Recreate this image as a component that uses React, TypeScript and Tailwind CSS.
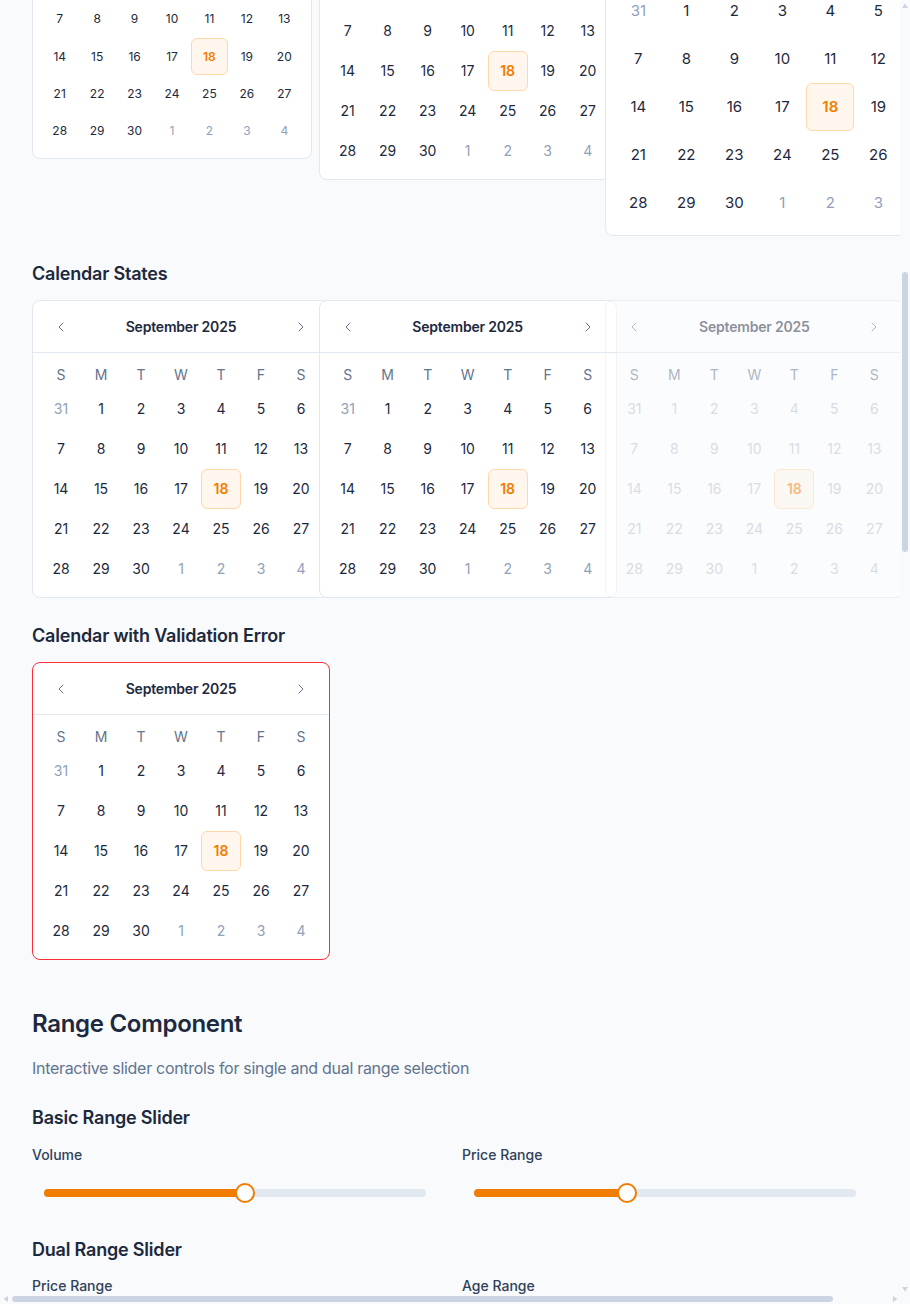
import React, { useLayoutEffect, useRef } from "react";
import clsx from "clsx";
import { ChevronLeft, ChevronRight } from "lucide-react";

type Size = "sm" | "md" | "lg";

const WEEKDAYS = ["S", "M", "T", "W", "T", "F", "S"];

// September 2025 starts on a Monday, so the grid opens with Aug 31 and closes on Oct 4
const DAYS: { n: number; outside: boolean }[] = [
  { n: 31, outside: true },
  ...Array.from({ length: 30 }, (_, i) => ({ n: i + 1, outside: false })),
  ...[1, 2, 3, 4].map((n) => ({ n, outside: true })),
];

const SIZES: Record<Size, { card: string; header: string; title: string; week: string; day: string; icon: number }> = {
  sm: { card: "w-[280px]", header: "h-[44px]", title: "text-[13px]", week: "h-7 text-xs", day: "text-xs", icon: 14 },
  md: { card: "w-[298px]", header: "h-[52px]", title: "text-sm", week: "h-7 text-sm", day: "text-sm", icon: 16 },
  lg: { card: "w-[354px]", header: "h-[56px]", title: "text-base", week: "h-10 text-[15px]", day: "text-[15px]", icon: 18 },
};

function Calendar({
  size = "md",
  selected = 18,
  disabled = false,
  error = false,
}: {
  size?: Size;
  selected?: number;
  disabled?: boolean;
  error?: boolean;
}) {
  const s = SIZES[size];

  return (
    <div
      className={clsx(
        "rounded-lg border bg-white",
        s.card,
        error ? "border-red-500" : "border-slate-200",
        disabled && "opacity-50"
      )}
    >
      <div className={clsx("grid grid-cols-7 items-center border-b border-slate-200 px-2", s.header)}>
        <button type="button" className="flex items-center justify-center text-slate-500">
          <ChevronLeft size={s.icon} strokeWidth={1.5} />
        </button>
        <div className={clsx("col-span-5 text-center font-semibold tracking-[-0.2px] text-slate-800", s.title)}>
          September 2025
        </div>
        <button type="button" className="flex items-center justify-center text-slate-500">
          <ChevronRight size={s.icon} strokeWidth={1.5} />
        </button>
      </div>

      <div className="grid grid-cols-7 p-2">
        {WEEKDAYS.map((d, i) => (
          <div key={i} className={clsx("flex items-center justify-center text-slate-500", s.week)}>
            {d}
          </div>
        ))}
        {DAYS.map((d, i) => {
          const isSel = !d.outside && d.n === selected;
          return (
            <div
              key={i}
              className={clsx(
                "flex aspect-square items-center justify-center rounded-md border",
                s.day,
                isSel
                  ? "border-orange-200 bg-orange-50 font-semibold text-[#f07c00]"
                  : "border-transparent",
                !isSel && disabled && "text-[#b8c2cf]",
                !isSel && !disabled && (d.outside ? "text-slate-400" : "text-slate-800")
              )}
            >
              {d.n}
            </div>
          );
        })}
      </div>
    </div>
  );
}

function Slider({ label, from = 0, to }: { label: string; from?: number; to: number }) {
  const dual = from > 0;
  return (
    <div>
      <div className="text-sm font-medium leading-5 text-slate-700">{label}</div>
      <div className="mt-[18px] px-3">
        <div className="relative flex h-5 items-center">
          <div className="relative h-2 w-full rounded-full bg-slate-200">
            <div
              className="absolute inset-y-0 rounded-full bg-[#f07c00]"
              style={{ left: `${from}%`, width: `${to - from}%` }}
            />
          </div>
          {dual && (
            <div
              className="absolute top-0 h-5 w-5 -translate-x-1/2 rounded-full border-[2.5px] border-[#f07c00] bg-white"
              style={{ left: `${from}%` }}
            />
          )}
          <div
            className="absolute top-0 h-5 w-5 -translate-x-1/2 rounded-full border-[2.5px] border-[#f07c00] bg-white"
            style={{ left: `${to}%` }}
          />
        </div>
      </div>
    </div>
  );
}

function SubHeading({ children, innerRef }: { children: React.ReactNode; innerRef?: React.Ref<HTMLHeadingElement> }) {
  return (
    <h3 ref={innerRef} className="mb-3 text-lg font-semibold leading-7 tracking-[-0.2px] text-slate-800">
      {children}
    </h3>
  );
}

// tiny scrollbar arrow, pointing the given way
function Arrow({ dir }: { dir: "up" | "down" | "left" | "right" }) {
  const points = {
    up: "3,0.5 6,5 0,5",
    down: "0,0 6,0 3,4.5",
    left: "0.5,3 5,0 5,6",
    right: "0,0 4.5,3 0,6",
  }[dir];
  const vertical = dir === "up" || dir === "down";
  return (
    <div className="flex h-2.5 w-2.5 shrink-0 items-center justify-center">
      <svg width={vertical ? 6 : 5} height={vertical ? 5 : 6} viewBox={vertical ? "0 0 6 5" : "0 0 5 6"}>
        <polygon points={points} fill="#cbd5e1" />
      </svg>
    </div>
  );
}

export default function App() {
  const scrollRef = useRef<HTMLDivElement>(null);
  const anchorRef = useRef<HTMLHeadingElement>(null);

  // the showcase is captured partway down, with "Calendar States" near the top
  useLayoutEffect(() => {
    const box = scrollRef.current;
    const anchor = anchorRef.current;
    if (!box || !anchor) return;
    box.scrollTop = anchor.offsetTop - 260;
  }, []);

  return (
    <div className="flex h-screen flex-col bg-[#f8fafc] font-['Inter','Noto_Sans',sans-serif] text-slate-800">
      <div className="flex min-h-0 flex-1">
        <div ref={scrollRef} className="relative min-w-0 flex-1 overflow-hidden">
          <main className="px-8 pb-16 pt-8">
            <header className="border-b border-slate-200 pb-10">
              <div className="mb-2 text-xs font-semibold uppercase tracking-wider text-[#f07c00]">Component Library</div>
              <h1 className="text-3xl font-bold leading-9 text-slate-900">Form Controls</h1>
              <p className="mt-2 text-base leading-6 text-slate-500">
                Date pickers, sliders and other inputs used across the product
              </p>
            </header>

            <section className="mt-12">
              <h2 className="mb-4 text-2xl font-semibold leading-8 tracking-[-0.3px] text-slate-800">Calendar Component</h2>
              <p className="mb-6 text-base leading-6 tracking-[-0.3px] text-slate-500">
                Date selection with month navigation, sizes and states
              </p>

              <SubHeading>Basic Calendar</SubHeading>
              <div className="grid grid-cols-3 items-start gap-6">
                <Calendar />
                <Calendar selected={5} />
              </div>

              <div className="mt-6">
                <SubHeading>Calendar with Preselected Date</SubHeading>
                <div className="grid grid-cols-3 items-start gap-6">
                  <Calendar selected={24} />
                </div>
              </div>

              <div className="mt-6">
                <SubHeading>Calendar Sizes</SubHeading>
                <div className="grid grid-cols-3 items-start gap-6">
                  <Calendar size="sm" />
                  <Calendar size="md" />
                  <Calendar size="lg" />
                </div>
              </div>

              <div className="mt-6">
                <SubHeading innerRef={anchorRef}>Calendar States</SubHeading>
                <div className="grid grid-cols-3 items-start gap-6">
                  <Calendar />
                  <Calendar />
                  <Calendar disabled />
                </div>
              </div>

              <div className="mt-6">
                <SubHeading>Calendar with Validation Error</SubHeading>
                <Calendar error />
              </div>
            </section>

            <section className="mt-12">
              <h2 className="mb-4 text-2xl font-semibold leading-8 tracking-[-0.3px] text-slate-800">Range Component</h2>
              <p className="mb-6 text-base leading-6 tracking-[-0.3px] text-slate-500">
                Interactive slider controls for single and dual range selection
              </p>

              <h3 className="mb-[13px] text-lg font-semibold leading-7 tracking-[-0.2px] text-slate-800">
                Basic Range Slider
              </h3>
              <div className="grid grid-cols-2 gap-6">
                <Slider label="Volume" to={52.6} />
                <Slider label="Price Range" to={40} />
              </div>

              <h3 className="mb-3 mt-[33px] text-lg font-semibold leading-7 tracking-[-0.2px] text-slate-800">
                Dual Range Slider
              </h3>
              <div className="grid grid-cols-2 gap-6">
                <Slider label="Price Range" from={20} to={70} />
                <Slider label="Age Range" from={25} to={60} />
              </div>

              <h3 className="mb-3 mt-8 text-lg font-semibold leading-7 tracking-[-0.2px] text-slate-800">
                Range with Steps
              </h3>
              <div className="grid grid-cols-2 gap-6">
                <Slider label="Temperature" to={60} />
                <Slider label="Rating" to={80} />
              </div>
            </section>
          </main>
        </div>

        {/* vertical scrollbar */}
        <div className="flex w-2.5 shrink-0 flex-col">
          <Arrow dir="up" />
          <div className="flex min-h-0 flex-1 justify-center">
            <div className="mt-[262px] h-[280px] w-1.5 rounded-full bg-[#cbd5e1]" />
          </div>
          <Arrow dir="down" />
        </div>
      </div>

      {/* horizontal scrollbar */}
      <div className="flex h-2.5 shrink-0">
        <Arrow dir="left" />
        <div className="flex min-w-0 flex-1 items-center">
          <div className="ml-0.5 h-1.5 w-[821px] rounded-full bg-[#cbd5e1]" />
        </div>
        <Arrow dir="right" />
        <div className="w-2.5 shrink-0" />
      </div>
    </div>
  );
}
